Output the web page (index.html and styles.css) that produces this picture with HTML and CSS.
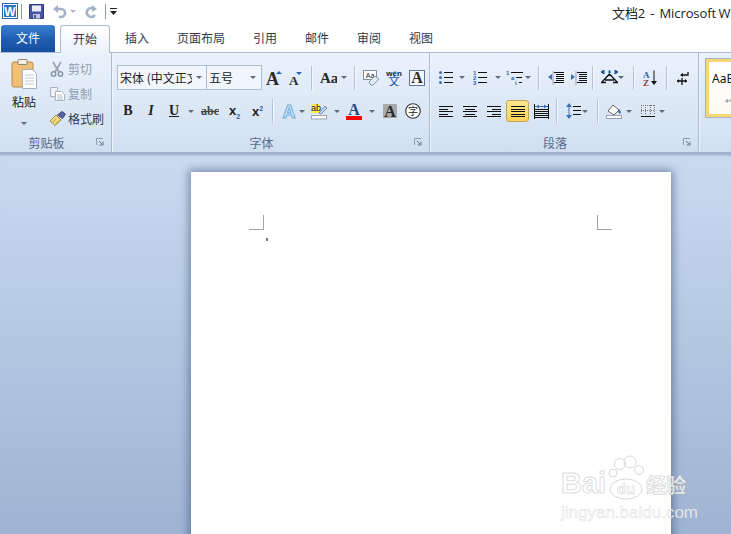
FILE: index.html
```html
<!DOCTYPE html>
<html>
<head>
	<title>文档2 - Microsoft Word</title>
	<link rel="stylesheet" href="styles.css">
</head>
<body>

	<div class="titlebar">
		<div class="qat">
			<svg class="ml2" width="16" height="16" viewBox="0 0 16 16"><rect x=".5" y=".5" width="15" height="15" fill="#fff" stroke="#2a63b0"/><rect x="2" y="2" width="12" height="12" fill="#2f74c4"/><text x="8" y="12.5" text-anchor="middle" class="gl-w">W</text></svg>
			<span class="qat-sep ml3"></span>
			<svg class="ml7" width="15" height="15" viewBox="0 0 15 15"><path d="M.5.5h14v14h-14z" fill="#4a55a8" stroke="#2f3a80"/><rect x="3" y="1.5" width="9" height="6" fill="#e8edf8"/><rect x="4" y="10" width="7" height="4.5" fill="#c5cad8"/><rect x="5" y="11" width="2" height="3" fill="#4a55a8"/></svg>
			<svg class="ml8" width="15" height="15" viewBox="0 0 15 15"><path d="M3 5h6a4 4 0 0 1 0 8H7" fill="none" stroke="#a3b2c6" stroke-width="2.6"/><path d="M1 5l5-4v8z" fill="#a3b2c6"/></svg>
			<span class="qat-caret ml3"></span>
			<svg class="ml8" width="15" height="15" viewBox="0 0 15 15"><path d="M10 4H7a4.500 4.500 0 1 0 4 7" fill="none" stroke="#a3b2c6" stroke-width="2.6"/><path d="M8 1l5 4-5 3z" fill="#a3b2c6"/></svg>
			<span class="qat-sep ml6"></span>
			<svg class="ml3" width="9" height="9" viewBox="0 0 9 9"><path d="M1 1.500h7" stroke="#222"/><path d="M1 4h7L4.500 8z" fill="#222"/></svg>
		</div>
		<div class="doc-title">文档2 &nbsp;-&nbsp; Microsoft Word</div>
	</div>

	<div class="tabs">
		<span class="file-tab">文件</span>
		<span class="home-tab">开始</span>
		<span class="tab first">插入</span>
		<span class="tab">页面布局</span>
		<span class="tab">引用</span>
		<span class="tab">邮件</span>
		<span class="tab">审阅</span>
		<span class="tab">视图</span>
	</div>

	<div class="ribbon">

		<div class="group clip-group">
			<div class="clip-body">
				<div class="paste">
					<svg width="27" height="32" viewBox="0 0 27 32"><rect x="1" y="4" width="21" height="25" rx="2" fill="#efc078" stroke="#b98a45"/><rect x="7" y="1.500" width="9" height="5" rx="1" fill="#f3f0e6" stroke="#8d8672"/><path d="M11.500 11.500h10l4 4v15h-14z" fill="#fff" stroke="#a5aebb"/><path d="M14 17h9M14 20h9M14 23h9M14 26h9" stroke="#c0c8d4"/></svg>
					<span class="paste-label">粘贴</span>
					<span class="caret paste-caret"></span>
				</div>
				<div class="clip-list">
					<div class="clip-item off">
						<svg width="14" height="16" viewBox="0 0 14 16"><path d="M3 1l6 10M11 1L5 11" stroke="#9aa6b5" stroke-width="1.800"/><circle cx="3.500" cy="13" r="2.200" fill="none" stroke="#8b97a8" stroke-width="1.500"/><circle cx="10.500" cy="13" r="2.200" fill="none" stroke="#8b97a8" stroke-width="1.500"/></svg>
						<span>剪切</span>
					</div>
					<div class="clip-item off">
						<svg width="15" height="14" viewBox="0 0 15 14"><path d="M.5.5h7v9h-7z" fill="#eef1f5" stroke="#aab3c0"/><path d="M5.500 4.500h6l3 3v6h-9z" fill="#fff" stroke="#aab3c0"/><path d="M7 8h5M7 10h6M7 12h6" stroke="#b3bcc9"/></svg>
						<span>复制</span>
					</div>
					<div class="clip-item">
						<svg width="16" height="15" viewBox="0 0 16 15"><path d="M0 10l6-6 5 5-6 5.500z" fill="#f2d878" stroke="#a88f40"/><path d="M3 11l3-3M6 12.500l3-3" stroke="#b39a45"/><path d="M7.500 4L12 .500l3.500 2.500-3 4.500z" fill="#59639f" stroke="#3f4a85"/></svg>
						<span>格式刷</span>
					</div>
				</div>
			</div>
			<div class="group-label"><span>剪贴板</span><svg class="launcher" width="8" height="8" viewBox="0 0 8 8"><path d="M.5 7V.5H7" fill="none" stroke="#8d9cb0"/><path d="M3 3l3 3M7 3.500V7H3.500" fill="none" stroke="#66758a"/></svg></div>
		</div>

		<div class="group font-group">
			<div class="tool-rows">
				<div class="row row1">
					<div class="combo w90"><span class="combo-text">宋体 (中文正文)</span><span class="caret w14"></span></div>
					<div class="combo w55"><span class="combo-text">五号</span><span class="caret w16"></span></div>
					<span class="t w22"><svg width="18" height="16" viewBox="0 0 18 16"><text x="2" y="15" class="gl gl17">A</text><path d="M12 4l3-3 3 3z" fill="#2b62ad"/></svg></span>
					<span class="t w22"><svg width="16" height="14" viewBox="0 0 16 14"><text x="2" y="14" class="gl gl12">A</text><path d="M9 1h6l-3 3z" fill="#2b62ad"/></svg></span>
					<span class="sep w10"></span>
					<span class="t w24"><svg width="17" height="14" viewBox="0 0 17 14"><text x="0" y="12" class="gl gl13">Aa</text></svg></span>
					<span class="caret w8"></span>
					<span class="sep w12"></span>
					<span class="t w22"><svg width="17" height="16" viewBox="0 0 17 16"><rect x=".5" y=".5" width="13" height="9" fill="#fff" stroke="#7f8ea3"/><text x="7" y="7.500" text-anchor="middle" class="gl-small">Aa</text><path d="M6 12l6-6 4 3-6 6H8z" fill="#e4eaf2" stroke="#8496ad"/></svg></span>
					<span class="t w23"><svg width="16" height="17" viewBox="0 0 16 17"><text x="8" y="6.500" text-anchor="middle" class="gl-wen">wén</text><text x="8" y="17" text-anchor="middle" class="gl-wen-cn">文</text></svg></span>
					<span class="t w23"><svg width="16" height="16" viewBox="0 0 16 16"><rect x=".5" y=".5" width="15" height="15" fill="#f4f8fc" stroke="#5d7595"/><text x="8" y="13" text-anchor="middle" class="gl gl14">A</text></svg></span>
				</div>
				<div class="row row2">
					<span class="t w22"><b class="fmt">B</b></span>
					<span class="t w24"><i class="fmt fmt-i">I</i></span>
					<span class="t w22"><b class="fmt fmt-u">U</b></span>
					<span class="caret w12"></span>
					<span class="t w26"><span class="fmt-strike">abc</span></span>
					<span class="t w23"><span class="fmt-x">x<sub>2</sub></span></span>
					<span class="t w23"><span class="fmt-x">x<sup>2</sup></span></span>
					<span class="sep w6"></span>
					<span class="t w20 ml4"><svg width="16" height="16" viewBox="0 0 16 16"><text x="8" y="14.500" text-anchor="middle" class="gl-effect">A</text></svg></span>
					<span class="caret w5"></span>
					<span class="t w30"><svg width="16" height="17" viewBox="0 0 16 17"><rect y="1" width="9" height="9" fill="#f7ef4a"/><text x="0" y="8" class="gl-ab">ab</text><path d="M8 10l6-7 2 2-6 6z" fill="#cfdcec" stroke="#6f86a6"/><rect x=".5" y="12.500" width="15" height="3.500" fill="#fff" stroke="#9aa5b3"/></svg></span>
					<span class="caret w5"></span>
					<span class="t w30"><svg width="16" height="17" viewBox="0 0 16 17"><text x="8" y="12" text-anchor="middle" class="gl gl-blue">A</text><rect y="13" width="16" height="4" fill="#f00"/></svg></span>
					<span class="caret w5"></span>
					<span class="t w32"><svg width="14" height="14" viewBox="0 0 14 14"><rect width="14" height="14" fill="#a9a9a9"/><text x="7" y="12.500" text-anchor="middle" class="gl gl14">A</text></svg></span>
					<span class="t w14"><svg width="16" height="16" viewBox="0 0 16 16"><circle cx="8" cy="8" r="7.300" fill="#fff" stroke="#333" stroke-width="1.100"/><text x="8" y="12" text-anchor="middle" class="gl-zi">字</text></svg></span>
				</div>
			</div>
			<div class="group-label"><span>字体</span><svg class="launcher" width="8" height="8" viewBox="0 0 8 8"><path d="M.5 7V.5H7" fill="none" stroke="#8d9cb0"/><path d="M3 3l3 3M7 3.500V7H3.500" fill="none" stroke="#66758a"/></svg></div>
		</div>

		<div class="group para-group">
			<div class="tool-rows">
				<div class="row row1">
					<span class="t w24"><svg width="15" height="13" viewBox="0 0 15 13"><path d="M5 1.500h9M5 6.500h9M5 11.500h9" stroke="#111"/><circle cx="1.500" cy="1.500" r="1.500" fill="#3f6fb5"/><circle cx="1.500" cy="6.500" r="1.500" fill="#3f6fb5"/><circle cx="1.500" cy="11.500" r="1.500" fill="#3f6fb5"/></svg></span>
					<span class="caret w8"></span>
					<span class="t w22 ml3"><svg width="15" height="15" viewBox="0 0 15 15"><path d="M5 2.500h9M5 7.500h9M5 12.500h9" stroke="#111"/><text x="0" y="5" class="gl-num">1</text><text x="0" y="10" class="gl-num">2</text><text x="0" y="15" class="gl-num">3</text></svg></span>
					<span class="caret w14"></span>
					<span class="t w20"><svg width="18" height="16" viewBox="0 0 18 16"><path d="M5 2.500h12M10 7.500h6M13 12.500h3" stroke="#111"/><text x="0" y="5" class="gl-num">1</text><text x="5" y="10" class="gl-num">a</text><text x="9" y="15" class="gl-num">i</text></svg></span>
					<span class="caret w6"></span>
					<span class="sep w14"></span>
					<span class="t w22"><svg width="16" height="14" viewBox="0 0 16 14"><path d="M6 1.500h10M8 3.500h8M8 5.500h8M8 7.500h8M8 9.500h8M6 11.500h10" stroke="#111"/><path d="M5 .500v13" stroke="#555" stroke-dasharray="1 1"/><path d="M0 6l4-3v6z" fill="#3f6fb5"/></svg></span>
					<span class="t w23"><svg width="16" height="14" viewBox="0 0 16 14"><path d="M6 1.500h10M8 3.500h8M8 5.500h8M8 7.500h8M8 9.500h8M6 11.500h10" stroke="#111"/><path d="M5 .500v13" stroke="#555" stroke-dasharray="1 1"/><path d="M4 6L0 3v6z" fill="#3f6fb5"/></svg></span>
					<span class="sep w4"></span>
					<span class="t w18 ml6"><svg width="17" height="15" viewBox="0 0 17 15"><path d="M1 12L8.500 4 16 12M4 10h9M0 12.500h5M12 12.500h5" fill="none" stroke="#111" stroke-width="1.300"/><path d="M0 2l3-2v4zM17 2l-3-2v4zM7 2h3M8.500 0v4" fill="#1f4f9a" stroke="#1f4f9a"/></svg></span>
					<span class="caret w6"></span>
					<span class="sep w18"></span>
					<span class="t w16"><svg width="14" height="16" viewBox="0 0 14 16"><text x="0" y="7.500" class="gl-az blue">A</text><text x="0" y="15.500" class="gl-az red">Z</text><path d="M11 .500v13" stroke="#111"/><path d="M8 11h6l-3 4z" fill="#111"/></svg></span>
					<span class="sep w16"></span>
					<span class="t w18"><svg width="12" height="14" viewBox="0 0 12 14"><path d="M11 1v3H5M5 7v7M0 10h10" fill="none" stroke="#111" stroke-width="1.300"/><path d="M6 2v4L3 4zM2 8v4l-2-2zM8 8v4l2-2z" fill="#111"/></svg></span>
				</div>
				<div class="row row2">
					<span class="t w24"><svg width="14" height="11" viewBox="0 0 14 11"><path d="M0 .500h14M0 3.500h9M0 5.500h14M0 8.500h9M0 10.500h14" stroke="#111"/></svg></span>
					<span class="t w24"><svg width="14" height="11" viewBox="0 0 14 11"><path d="M0 .500h14M2 3.500h10M0 5.500h14M2 8.500h10M0 10.500h14" stroke="#111"/></svg></span>
					<span class="t w24"><svg width="14" height="11" viewBox="0 0 14 11"><path d="M0 .500h14M5 3.500h9M0 5.500h14M5 8.500h9M0 10.500h14" stroke="#111"/></svg></span>
					<span class="t w23 active"><svg width="14" height="11" viewBox="0 0 14 11"><path d="M0 .500h14M0 3.500h14M0 5.500h14M0 8.500h14M0 10.500h14" stroke="#111"/></svg></span>
					<span class="t w24"><svg width="15" height="15" viewBox="0 0 15 15"><path d="M0 5.500h15M0 7.500h15M0 9.500h15M0 11.500h15M0 13.500h15M.5 0v15M14.500 0v15" stroke="#111"/><path d="M1 2.500h13" stroke="#3f6fb5"/><path d="M2 2.500l3-2v4zM13 2.500l-3-2v4z" fill="#3f6fb5"/></svg></span>
					<span class="sep w6"></span>
					<span class="t w15 ml7"><svg width="15" height="16" viewBox="0 0 15 16"><path d="M7 3.500h8M7 7.500h8M7 11.500h8" stroke="#111"/><path d="M3 3v10" stroke="#3f6fb5"/><path d="M3 0l3 4H0zM3 16l3-4H0z" fill="#3f6fb5"/></svg></span>
					<span class="caret w8"></span>
					<span class="sep w16"></span>
					<span class="t w16 ml1"><svg width="16" height="16" viewBox="0 0 16 16"><path d="M2 8l5-6 6 5-5 5z" fill="#fff" stroke="#666"/><path d="M13 6c2 2 2 4 1 5-2-1-2-3-1-5z" fill="#2b62ad"/><rect x=".5" y="12.500" width="15" height="3" fill="#fff" stroke="#9aa5b3"/></svg></span>
					<span class="caret w14"></span>
					<span class="t w14 ml5"><svg width="14" height="14" viewBox="0 0 14 14"><path d="M.5 1v10M4.500 1v10M9.500 1v10M13.500 1v10M0 1.500h14M0 6.500h14" stroke="#777" stroke-dasharray="1 1"/><path d="M0 12.500h14" stroke="#111"/></svg></span>
					<span class="caret w14"></span>
				</div>
			</div>
			<div class="group-label"><span>段落</span><svg class="launcher" width="8" height="8" viewBox="0 0 8 8"><path d="M.5 7V.5H7" fill="none" stroke="#8d9cb0"/><path d="M3 3l3 3M7 3.500V7H3.500" fill="none" stroke="#66758a"/></svg></div>
		</div>

		<div class="style-card">
			<span class="style-name">AaBbCc</span>
			<span class="style-mark">↵</span>
		</div>

	</div>

	<div class="workspace">
		<div class="page">
			<div class="margins">
				<span class="mark mark-l"></span>
				<span class="mark mark-r"></span>
			</div>
			<div class="cursor"></div>
		</div>
		<div class="watermark">
			<div class="wm-top">
				<span class="wm-bai">Bai</span>
				<svg class="wm-paw" width="36" height="48" viewBox="0 0 36 48"><g fill="none" stroke="#d8d8d8"><circle cx="5" cy="20" r="4"/><circle cx="12" cy="11" r="5.500"/><circle cx="22" cy="9" r="6"/><circle cx="31" cy="17" r="4.500"/><ellipse cx="18" cy="36" rx="16" ry="10"/></g><text x="18" y="41" text-anchor="middle" class="wm-du">du</text></svg>
				<span class="wm-cn">经验</span>
			</div>
			<div class="wm-url">jingyan.baidu.com</div>
		</div>
	</div>

</body>
</html>
```

FILE: styles.css
```css
html, body{
	margin: 0;
	height: 100%;
	overflow: hidden;
}
body{
	display: flex;
	flex-direction: column;
	background-color: #fff;
	font: 12px "Noto Sans CJK SC", "Noto Sans", sans-serif;
	color: #2b3a4e;
}
svg{
	display: block;
	flex: none;
}

/* 标题栏 */
.titlebar{
	display: flex;
	align-items: flex-start;
	height: 25px;
	flex: none;
}
.qat{
	display: flex;
	align-items: center;
	width: 612px;
	height: 22px;
	flex: none;
}
.qat-sep{
	width: 1px;
	height: 15px;
	background-color: #8f9aa8;
}
.qat-caret{
	border: 3px solid transparent;
	border-top: 3px solid #aab5c4;
	border-bottom: 0;
}
.doc-title{
	font: 13px "Open Sans", "Noto Sans CJK SC", sans-serif;
	line-height: 26px;
	color: #222;
	letter-spacing: -.1px;
	word-spacing: -.7px;
	white-space: nowrap;
}

/* 选项卡 */
.tabs{
	display: flex;
	align-items: flex-start;
	flex: none;
	height: 28px;
	margin-bottom: -1px;
	padding-left: 1px;
	position: relative;
	z-index: 2;
}
.file-tab{
	width: 54px;
	height: 27px;
	margin-right: 5px;
	border-radius: 3px 3px 0 0;
	background: linear-gradient(#3a80cf, #1e5cb0 55%, #184f9f);
	color: #fff;
	line-height: 26px;
	text-align: center;
}
.home-tab{
	box-sizing: border-box;
	width: 50px;
	height: 28px;
	border: 1px solid #a9bdd6;
	border-bottom: 0;
	border-radius: 3px 3px 0 0;
	background: linear-gradient(#fff, #eaf1fa);
	line-height: 25px;
	text-align: center;
}
.tab{
	margin-left: 28px;
	line-height: 26px;
}
.tab.first{
	margin-left: 15px;
}

/* 功能区 */
.ribbon{
	display: flex;
	flex: none;
	height: 99px;
	border-top: 1px solid #a7bbd5;
	border-bottom: 2px solid #9fb3cd;
	background: linear-gradient(#eaf2fc, #d0dff0);
	overflow: hidden;
}
.group{
	display: flex;
	flex-direction: column;
	flex: none;
	box-sizing: border-box;
	border-right: 1px solid #a9bcd4;
	box-shadow: 1px 0 0 #eef4fb;
}
.clip-group{
	width: 112px;
}
.font-group{
	width: 318px;
	padding-left: 5px;
}
.para-group{
	width: 269px;
	padding-left: 4px;
}
.group-label{
	display: flex;
	align-items: center;
	height: 20px;
	margin-top: auto;
	color: #566b88;
}
.font-group .group-label{
	margin-left: -5px;
}
.para-group .group-label{
	margin-left: -4px;
}
.group-label span{
	flex: 1;
	text-align: center;
}
.launcher{
	margin: 0 7px 0 3px;
}

/* 剪贴板 */
.clip-body{
	display: flex;
}
.paste{
	display: flex;
	flex-direction: column;
	align-items: center;
	width: 48px;
	padding-top: 5px;
}
.paste-label{
	margin-top: 2px;
	line-height: 20px;
	color: #222;
}
.paste-caret.caret{
	height: 12px;
	margin-top: 5px;
}
.clip-list{
	display: flex;
	flex-direction: column;
	padding-top: 3px;
}
.clip-item{
	display: grid;
	grid-template-columns: 20px auto;
	align-items: center;
	height: 25px;
	white-space: nowrap;
}
.clip-item svg{
	margin-left: 2px;
}
.clip-item.off span{
	color: #8e9cb0;
}

/* 工具行 */
.tool-rows{
	display: flex;
	flex-direction: column;
	padding-top: 12px;
}
.row{
	display: flex;
	align-items: center;
}
.row1{
	height: 25px;
	margin-bottom: 10px;
}
.row2{
	height: 22px;
}
.t{
	display: flex;
	align-items: center;
	justify-content: center;
	flex: none;
	height: 22px;
}
.caret{
	display: flex;
	align-items: center;
	justify-content: center;
	flex: none;
	height: 22px;
}
.caret::after{
	content: "";
	border: 3px solid transparent;
	border-top: 3px solid #5f6b7c;
	border-bottom: 0;
}
.sep{
	display: flex;
	justify-content: center;
	flex: none;
	height: 24px;
}
.sep::after{
	content: "";
	width: 1px;
	background-color: #b3c4da;
	box-shadow: 1px 0 0 #f3f7fc;
}
.w4{ width: 4px; }
.w5{ width: 5px; }
.w6{ width: 6px; }
.w8{ width: 8px; }
.w10{ width: 10px; }
.w12{ width: 12px; }
.w14{ width: 14px; }
.w15{ width: 15px; }
.w16{ width: 16px; }
.w18{ width: 18px; }
.w20{ width: 20px; }
.w22{ width: 22px; }
.w23{ width: 23px; }
.w24{ width: 24px; }
.w26{ width: 26px; }
.w30{ width: 30px; }
.w32{ width: 32px; }
.w55{ width: 55px; }
.w90{ width: 90px; }
.ml1{ margin-left: 1px; }
.ml2{ margin-left: 2px; }
.ml3{ margin-left: 3px; }
.ml4{ margin-left: 4px; }
.ml5{ margin-left: 5px; }
.ml6{ margin-left: 6px; }
.ml7{ margin-left: 7px; }
.ml8{ margin-left: 8px; }

.combo{
	display: flex;
	align-items: center;
	flex: none;
	box-sizing: border-box;
	height: 25px;
	border: 1px solid #abbed6;
	background-color: #f1f6fc;
	color: #222;
}
.combo + .combo{
	border-left: 0;
}
.combo-text{
	flex: 1;
	min-width: 0;
	padding-left: 2px;
	white-space: nowrap;
	overflow: hidden;
}
.active{
	box-sizing: border-box;
	border: 1px solid #c2a35a;
	border-radius: 3px;
	background: linear-gradient(#ffe88f, #ffd258);
}

/* 字形按钮 */
.fmt{
	font: bold 14px "Liberation Serif", serif;
	color: #222;
}
.fmt-i{
	font-style: italic;
}
.fmt-u{
	text-decoration: underline;
}
.fmt-strike{
	font: bold 12px "Liberation Serif", serif;
	color: #444;
	text-decoration: line-through;
}
.fmt-x{
	font: bold 13px "Liberation Sans", sans-serif;
	color: #222;
}
.fmt-x sub, .fmt-x sup{
	font-size: 7px;
	color: #2b62ad;
}
.gl{
	font-family: "Liberation Serif", serif;
	font-weight: bold;
	fill: #2a2a2a;
}
.gl17{ font-size: 18px; }
.gl14{ font-size: 16px; }
.gl13{ font-size: 15px; }
.gl12{ font-size: 13px; }
.gl-blue{
	font-size: 16px;
	fill: #27468a;
}
.gl-w{
	font: bold 12px "Liberation Sans", sans-serif;
	fill: #fff;
}
.gl-small{
	font: 7px "Liberation Sans", sans-serif;
	fill: #222;
}
.gl-wen{
	font: bold 8px "Liberation Sans", sans-serif;
	fill: #222;
}
.gl-wen-cn{
	font: 12px "Noto Sans CJK SC", sans-serif;
	fill: #2b4fb5;
}
.gl-effect{
	font: bold 18px "Liberation Sans", sans-serif;
	fill: #d6e8f8;
	stroke: #6eaee0;
}
.gl-ab{
	font: 9px "Liberation Sans", sans-serif;
	fill: #222;
}
.gl-zi{
	font: 10px "Noto Sans CJK SC", sans-serif;
	fill: #222;
}
.gl-num{
	font: bold 6px "Liberation Sans", sans-serif;
	fill: #2f5fa8;
}
.gl-az{
	font: bold 9px "Liberation Serif", serif;
}
.gl-az.blue{ fill: #2b62ad; }
.gl-az.red{ fill: #9a3a3a; }

/* 样式库 */
.style-card{
	display: flex;
	flex-direction: column;
	flex: none;
	box-sizing: border-box;
	width: 60px;
	height: 58px;
	margin: 6px 0 0 7px;
	border: 3px solid #f8d675;
	outline: 1px solid #a9b4c2;
	background: linear-gradient(#fff, #fdfaf0);
	padding-left: 3px;
}
.style-name{
	margin-top: 7px;
	font: 12px "Noto Sans", sans-serif;
	color: #111;
	line-height: 20px;
}
.style-mark{
	margin: 3px 0 0 13px;
	font-size: 10px;
	color: #7c8ea8;
}

/* 编辑区 */
.workspace{
	flex: 1;
	display: flex;
	position: relative;
	padding: 18px 0 0 191px;
	min-height: 0;
	overflow: hidden;
	background: linear-gradient(#cadbf1, #9eb4d2);
	box-shadow: inset 0 3px 3px -2px #8ea4c3;
}
.page{
	box-sizing: border-box;
	width: 480px;
	height: 800px;
	flex: none;
	padding: 43px 59px 0 58px;
	background-color: #fff;
	box-shadow: 0 0 9px 2px rgba(50, 70, 105, .55);
}
.margins{
	display: flex;
	justify-content: space-between;
}
.mark{
	box-sizing: border-box;
	width: 15px;
	height: 15px;
	border-bottom: 1px solid #a3a3a3;
}
.mark-l{
	border-right: 1px solid #a3a3a3;
}
.mark-r{
	border-left: 1px solid #a3a3a3;
}
.cursor{
	width: 2px;
	height: 3px;
	margin: 8px 0 0 17px;
	background-color: #777;
}

/* 水印 */
.watermark{
	position: absolute;
	left: 561px;
	top: 298px;
	width: 135px;
	color: rgba(255, 255, 255, .85);
}
.wm-top{
	display: flex;
	align-items: flex-end;
	height: 47px;
}
.wm-bai, .wm-cn{
	-webkit-text-stroke: 1px rgba(165, 165, 165, .4);
}
.wm-bai{
	font: bold 29px "Liberation Sans", sans-serif;
	line-height: 31px;
}
.wm-paw{
	margin: -6px 0 -2px 2px;
}
.wm-du{
	font: bold 15px "Liberation Sans", sans-serif;
	fill: #fff;
	stroke: #d0d0d0;
	stroke-width: .5;
}
.wm-cn{
	margin: 0 0 2px 2px;
	font: bold 20px "Noto Sans CJK SC", sans-serif;
	line-height: 24px;
}
.wm-url{
	margin-top: 4px;
	font: 17px "Liberation Sans", sans-serif;
	line-height: 20px;
	white-space: nowrap;
	-webkit-text-stroke: .6px rgba(165, 165, 165, .35);
}
```
